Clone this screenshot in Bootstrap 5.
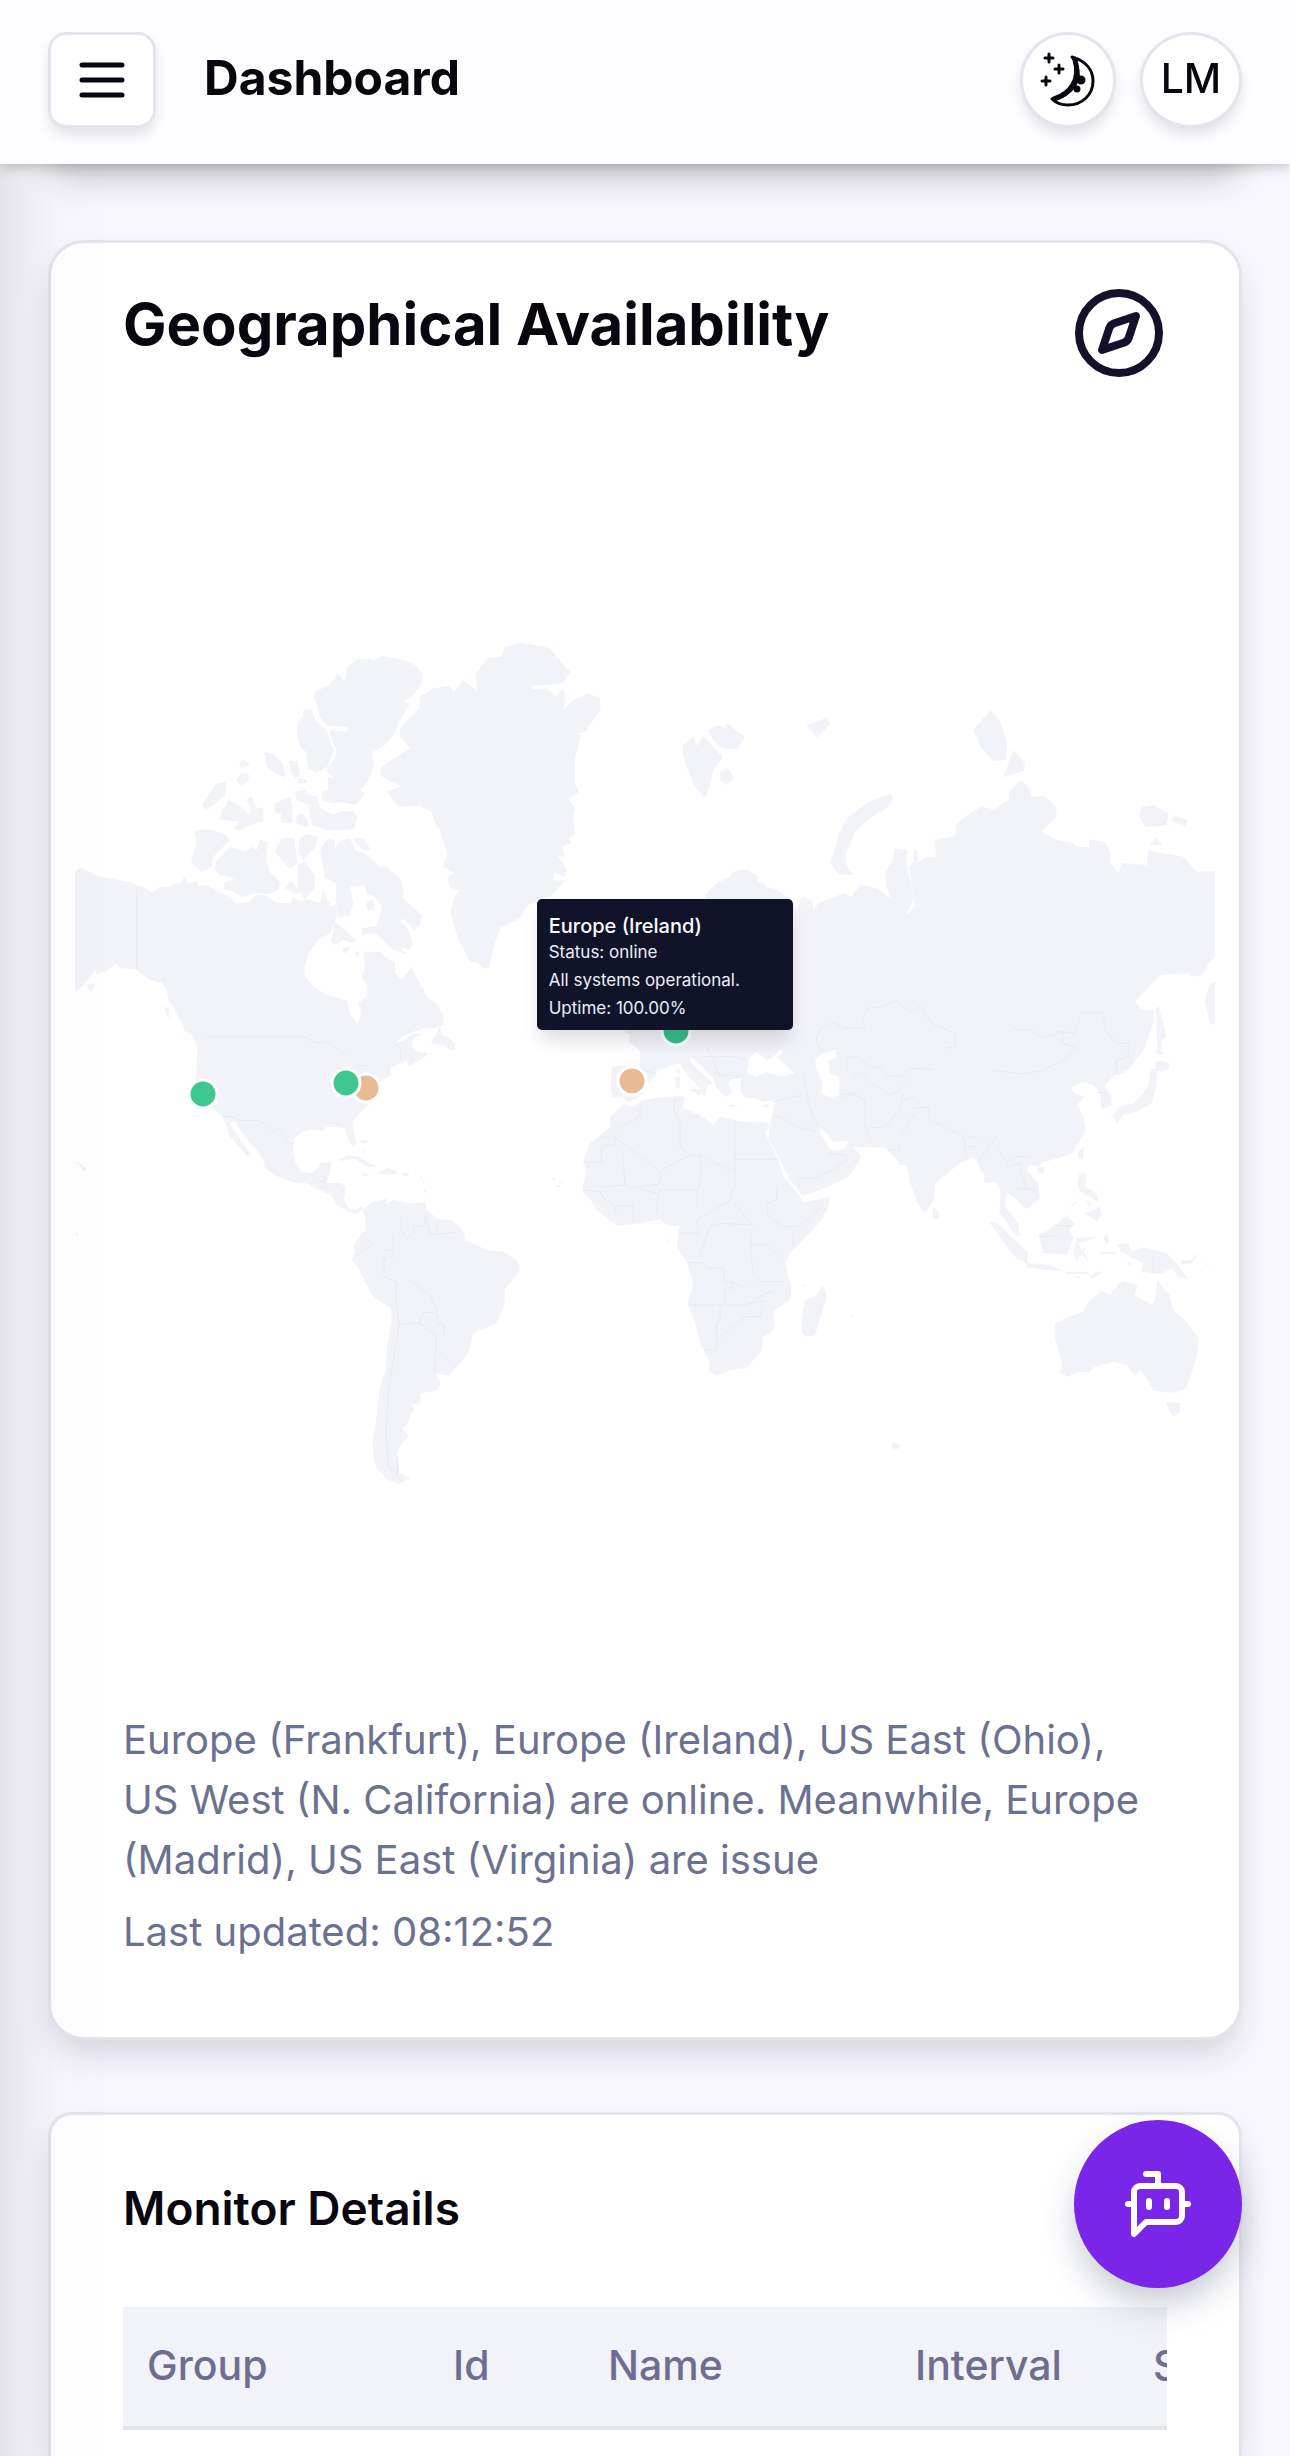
<!DOCTYPE html>
<html lang="en">
<head>
<meta charset="utf-8">
<meta name="viewport" content="width=device-width, initial-scale=1">
<title>Dashboard</title>
<link href="https://cdn.jsdelivr.net/npm/bootstrap@5.3.0/dist/css/bootstrap.min.css" rel="stylesheet">
<style>
  :root { --ink: #09060f; --line: #e4e4ee; --soft: #f2f3f8; --muted-ink: #6b7190; }
  body { font-family: Inter, "Liberation Sans", sans-serif; color: var(--ink); background: #f8f7fd; }
  .app-shell { min-height: 100vh; overflow: hidden; }
  .edge-shade { position: fixed; top: 0; bottom: 0; left: 0; width: 112px; z-index: 5; pointer-events: none;
    background: linear-gradient(90deg, rgba(10,10,20,.08), rgba(10,10,20,.045) 25%, rgba(10,10,20,.012) 50%, transparent); }
  .topbar { height: 164px; padding: 0 48px 4px; background: #fdfcfe; z-index: 10; box-shadow: 0 3px 12px rgba(0,0,0,.22); }
  .topbar-title { font-size: 48px; line-height: 56px; font-weight: 700; margin: 0 0 4px 48px; }
  .tool-btn { height: 96px; border: 3px solid var(--line); background: #fff; color: var(--ink); padding: 0;
    display: flex; align-items: center; justify-content: center; box-shadow: 0 8px 14px -2px rgba(20,20,40,.13); font-size: 41px; line-height: 56px; font-weight: 500; }
  .tool-menu { width: 108px; border-radius: 18px; }
  .tool-round { width: 96px; border-radius: 50%; }
  .tool-user { width: 102px; border-radius: 50%; padding-bottom: 4px; }
  .content { padding: 76px 48px 0; gap: 72px; }
  .content::before { content: ""; position: absolute; left: 48px; right: 48px; top: -60px; height: 50px; box-shadow: 0 22px 34px 2px rgba(0,0,0,.2); border-radius: 36px; }
  .panel { border: 3px solid var(--line); border-radius: 36px; background: #fff; box-shadow: 0 18px 34px -6px rgba(30,30,60,.17); }
  .panel-head { padding: 42px 72px 0; }
  .panel-title { font-size: 58px; line-height: 78px; font-weight: 700; margin: 0; }
  .map-wrap { padding: 0 24px; }
  .map-area { position: relative; }
  .map-area svg { display: block; width: 100%; height: auto; }
  .land { fill: var(--soft); }
  .sea { fill: #fff; }
  .borders { fill: none; stroke: #e9e9f0; stroke-width: 3; stroke-linejoin: round; }
  .pins circle { stroke: #fff; stroke-width: 3; }
  .map-tip { position: absolute; left: 40.5%; top: 39%; width: 256px; border-radius: 5px; padding: 13px 12px 6px; background: #111428; color: #eceef8;
    font-size: 17px; line-height: 24px; box-shadow: 0 14px 18px -4px rgba(20,20,40,.14); }
  .map-tip h3 { font-size: 20px; line-height: 28px; font-weight: 500; margin: 0; color: #fafaff; }
  .map-tip p { margin: 0 0 4px; }
  .panel-text { padding: 0 72px 63px; font-size: 40px; line-height: 60px; color: var(--muted-ink); }
  .panel-text p { margin: 0 0 12px; }
  .panel-open { border-bottom: 0; border-radius: 24px 24px 0 0; padding: 66px 72px 0; }
  .sub-title { font-size: 46px; line-height: 54px; font-weight: 600; margin: 0 0 72px; }
  .table-clip { overflow: hidden; }
  .monitors { table-layout: fixed; width: 1320px; margin: 0; }
  .monitors th { height: 121px; padding: 0 24px 4px; vertical-align: middle; font-size: 41px; line-height: 60px; font-weight: 500;
    color: #6f6d90; background: var(--soft); border-bottom: 4px solid var(--line); }
  .fab { position: fixed; right: 48px; bottom: 168px; width: 168px; height: 168px; border: 0; border-radius: 50%; background: #7926e8; z-index: 20;
    display: flex; align-items: center; justify-content: center; box-shadow: 0 18px 36px -4px rgba(40,50,90,.28); }
  .stroke-icon { fill: none; stroke: currentColor; stroke-width: 2; stroke-linecap: round; stroke-linejoin: round; }
</style>
</head>
<body>
<div class="app-shell d-flex flex-column">
  <header class="topbar d-flex align-items-center position-relative">
    <button type="button" class="tool-btn tool-menu" aria-label="Open menu">
      <svg width="60" height="60" viewBox="0 0 24 24" class="stroke-icon"><path d="M4 6h16M4 12h16M4 18h16"/></svg>
    </button>
    <h1 class="topbar-title">Dashboard</h1>
    <div class="d-flex ms-auto gap-4">
      <button type="button" class="tool-btn tool-round" aria-label="Switch theme">
        <svg width="56" height="56" viewBox="0 0 56 56" fill="none" stroke="currentColor" stroke-width="3" stroke-linecap="round" stroke-linejoin="round">
          <path d="M32 5C46 9 53 18 53 29C53 43 42 53 28 53C21 53 15 50 12 47C25 46 41 34 38 18C37 12 35 8 32 5Z"/>
          <path d="M35 8C41 28 30 42 14 47" stroke-width="5"/>
          <circle cx="41" cy="28" r="3" fill="currentColor"/><circle cx="37" cy="37" r="2" fill="currentColor"/>
          <path d="M9 2v8M5 6h8M19 13v8M15 17h8M6 25v8M2 29h8"/>
        </svg>
      </button>
      <button type="button" class="tool-btn tool-user">LM</button>
    </div>
  </header>

  <main class="content d-flex flex-column flex-grow-1 position-relative">
    <section class="panel position-relative">
      <div class="panel-head d-flex justify-content-between align-items-start">
        <h2 class="panel-title">Geographical Availability</h2>
        <svg width="96" height="96" viewBox="0 0 24 24" class="stroke-icon" color="#14122a"><circle cx="12" cy="12" r="10"/><path d="m16.24 7.76-1.804 5.411a2 2 0 0 1-1.265 1.265L7.76 16.24l1.804-5.411a2 2 0 0 1 1.265-1.265z"/></svg>
      </div>
      <div class="map-wrap">
        <div class="map-area">
          <svg viewBox="75 381 1140 1329" role="img" aria-label="World map of monitor regions">
            <g class="land">
              <!-- North America and the Arctic islands -->
              <g transform="translate(60 620) scale(.33333)">
                <path d="M45 755L62 742L110 768L165 778L205 785L255 805L275 818L300 800L322 802L350 788L360 792L372 772L385 790L410 782L415 798L440 795L480 818L515 832L525 850L560 850L590 826L615 825L650 848L690 850L700 832L720 845L745 838L780 850L790 810L805 845L815 860L830 850L830 895L810 940L775 960L745 1000L733 1040L735 1070L760 1100L800 1125L860 1142L870 1180L893 1215L903 1180L895 1150L920 1130L922 1100L905 1070L915 1040L910 995L960 995L975 1010L1005 1025L1005 1060L1025 1080L1055 1040L1075 1080L1100 1130L1135 1155L1152 1190L1150 1215L1120 1225H372L340 1160L325 1140L318 1100L305 1088L270 1080L225 1048L185 1045L165 1030L145 1050L110 1065L105 1050L95 1065L65 1100L45 1115Z"/>
                <path d="M862 140L895 117L930 116L938 122L970 108L1030 120L1065 135L1087 160L1085 190L1060 225L1030 245L1050 250L1020 300L1000 345L975 375L935 398L942 438L925 480L900 510L915 520L888 555L845 545L820 550L785 540L788 512L805 510L803 470L822 475L800 450L825 415L828 385L815 360L808 330L860 335L865 322L800 318L780 290L775 265L762 235L765 215L812 192L832 160L853 182Z"/>
                <path d="M730 270L755 268L770 305L800 330L812 370L822 390L802 442L770 457L745 445L738 395L722 385L710 345L715 305L728 290Z"/>
                <path d="M705 515L735 510L745 525L770 530L778 560L800 575L820 583L845 573L880 574L893 595L880 627L850 630L800 630L755 615L745 555L710 540Z"/>
                <path d="M537 430L550 418L570 435L545 445ZM527 480L545 460L567 462L565 480L545 497ZM612 397L640 402L668 430L678 472L655 465L622 445ZM688 422L712 422L720 465L705 475L692 460ZM712 475L738 478L740 490L715 490ZM468 492L497 485L497 525L440 570L426 555ZM505 540L545 560L565 585L575 570L560 540L575 525L588 562L610 565L610 605L570 615L540 632L522 625L535 605L480 598L485 575ZM645 550L690 530L698 570L695 610L665 608L663 580L646 580ZM708 590L725 578L742 600L742 622L710 612Z"/>
                <path d="M403 633L440 628L490 640L510 660L490 680L460 710L455 740L425 757L393 725L410 670ZM475 715L510 680L555 695L575 680L590 690L600 660L622 665L618 720L628 755L660 785L655 810L630 822L580 820L545 832L520 815L490 805L495 785L530 775L480 765L462 745ZM645 695L665 655L703 655L712 730L690 747L665 720ZM718 660L740 642L775 650L765 680L730 722L715 700ZM712 735L735 722L765 770L765 800L735 840L712 800ZM675 805L690 783L720 810L715 825Z"/>
                <path d="M780 690L800 657L825 660L825 690L840 660L870 655L885 690L915 700L960 740L980 740L1020 775L1032 815L1028 835L1085 885L1080 915L1060 930L1035 898L1018 900L1045 930L1057 965L1050 990L1020 980L1040 1003L1000 990L970 960L950 940L905 945L905 925L950 918L965 860L945 830L920 820L915 795L870 800L880 850L870 885L835 895L828 850L828 790L795 775ZM880 655L910 655L933 690L905 690ZM920 845L940 838L943 870L920 870ZM825 905L890 960L875 970L850 960L825 975L813 965ZM848 985L870 980L860 1000L848 995ZM885 995L898 995L895 1012ZM313 1160L328 1165L325 1185L335 1200L318 1185ZM80 1095L105 1090L103 1108L88 1115Z"/>
              </g>
              <!-- Greenland and Svalbard -->
              <g transform="translate(360 620) scale(.33333)">
                <path d="M180 230L220 205L270 198L282 215L308 180L350 210L348 160L385 112L425 110L435 80L480 69L565 82L630 155L610 190L512 198L515 208L560 205L588 228L608 205L617 230L610 270L640 240L685 220L720 235L722 270L675 335L645 342L663 343L645 415L645 490L657 517L625 535L645 565L640 595L645 640L625 655L635 670L605 680L615 712L592 705L620 750L615 772L585 755L580 780L615 782L575 825L505 855L480 895L420 925L400 985L387 1045L370 1045L350 1028L330 1025L292 950L272 880L280 840L298 810L270 805L262 770L285 760L250 740L262 700L240 630L220 600L215 575L180 558L115 560L82 515L125 498L90 485L60 465L65 440L150 385L118 345L120 325L178 265Z"/>
                <path d="M968 375L1000 350L1010 378L1030 348L1088 412L1060 450L1045 515L1032 532L1003 497L980 440L970 405ZM1042 330L1078 315L1095 325L1100 310L1153 350L1135 385L1100 388L1070 375ZM1080 455L1103 443L1123 475L1100 495L1082 482Z"/>
              </g>
              <!-- United States, Central and South America -->
              <g transform="translate(60 1000) scale(.33333)">
                <path d="M372 75H1130L1060 95L1030 108L1005 130L1030 122L1060 100L1085 105L1060 115L1055 140L1075 155L1105 160L1090 175L1045 198L1040 180L1010 195L990 205L995 225L965 240L950 270L940 300L900 340L878 365L878 385L890 430L880 442L865 420L855 385L835 382L800 380L790 392L760 388L725 395L703 415L698 450L705 485L725 515L755 520L772 505L780 490L815 485L805 530L800 550L840 548L857 560L852 600L865 625L885 632L900 620L920 630L915 640L905 630L885 642L865 635L830 615L820 592L790 575L765 565L740 550L705 550L650 528L615 505L610 480L590 450L555 410L525 365L515 362L512 375L545 425L572 462L565 470L540 445L510 408L500 380L485 345L450 320L425 290L408 240L410 200L412 140L395 105L370 90Z"/>
                <path d="M1140 75L1128 105L1112 130L1150 135L1165 148L1183 150L1185 130L1165 110L1145 105ZM835 480L865 465L900 472L950 500L920 500L885 477L845 482ZM955 520L985 503L1017 518L985 526ZM1028 519H1046V527H1028ZM907 520L932 525L912 528ZM900 422L918 420L922 430L905 430ZM905 440L918 455L910 458ZM45 485L58 488L72 500L80 508L70 515L64 500ZM48 699h6v6h-6zM1090 545h4v8h-4zM1092 570h4v8h-4zM1082 532h5v4h-5zM1480 535h5v5h-5zM1492 556h6v5h-6z"/>
                <path d="M910 630L940 605L970 600L985 590L978 612L1000 600L1050 610L1095 607L1100 630L1135 658L1175 660L1200 680L1213 700L1215 722L1250 735L1280 750L1330 755L1375 785L1380 810L1335 870L1333 910L1310 970L1285 980L1240 998L1228 1050L1210 1080L1185 1105L1165 1127L1125 1120L1142 1148L1130 1173L1082 1180L1080 1210L1055 1212L1065 1230L1050 1245L1045 1270L1028 1285L1045 1310L1025 1330L1010 1365L1018 1400L1018 1420L1052 1435L1015 1452L985 1440L950 1405L940 1370L938 1310L945 1290L960 1160L978 1110L980 1050L995 960L992 925L935 885L905 825L890 795L875 780L885 755L880 740L905 700L918 690L915 650Z"/>
              </g>
              <!-- Europe, Arabia and Africa -->
              <g transform="translate(500 860) scale(.33333)">
                <path d="M615 105L650 70L690 50L700 35L740 28L775 50L770 65L790 70L800 80L830 90L860 110L890 150L915 178L910 150L905 112L935 125L940 150L955 130L1030 100L1055 110L1080 75L1130 85L1175 120L1220 135L1220 920L1185 890L1155 862L1090 860L1055 850L1083 892L1060 930L1040 955L960 990L905 1008L895 990L870 960L835 890L805 835L810 790L822 745L825 720L790 725L770 715L735 712L720 690L725 655L690 658L685 672L695 695L680 712L665 700L650 685L640 655L610 625L590 605L570 590L575 610L600 635L640 670L625 675L612 710L602 685L560 645L540 610L515 615L490 628L470 630L465 650L440 670L430 700L410 715L385 725L370 710L340 712L332 695L335 620L365 615L420 620L420 570L385 545L390 525L372 515L400 505L615 500Z"/>
                <path d="M525 652L541 650L540 685L527 685ZM528 632L538 626L538 645ZM565 688L605 688L600 708ZM685 733L720 738L690 741ZM785 738L808 730L800 744Z"/>
                <path d="M370 730L400 740L430 720L480 712L540 708L555 712L548 745L600 765L640 795L660 770L700 780L740 785L800 788L808 800L795 820L835 900L850 950L880 985L905 1015L905 1028L990 1012L985 1040L960 1085L905 1145L870 1180L855 1210L865 1250L875 1275L873 1315L820 1355L822 1410L790 1430L785 1470L740 1525L690 1530L650 1547L630 1535L628 1505L600 1450L590 1400L563 1330L580 1270L560 1205L530 1160L538 1100L500 1095L480 1078L420 1090L350 1097L290 1050L270 1015L250 1000L247 980L260 940L250 905L270 850L330 800L330 770L360 745Z"/>
                <path d="M968 1272L980 1310L945 1425L920 1430L905 1415L905 1380L915 1320L950 1305ZM1053 1363h9v7h-9zM903 1267l5 8 10 2-10 3zM160 955h6v5h-6zM178 965h10v4h-10zM168 975h10v4h-10zM503 1137h6v7h-6z"/>
              </g>
              <!-- Northern Asia -->
              <g transform="translate(800 680) scale(.33333)">
                <path d="M-20 720L5 650L35 660L40 680L30 695L50 695L60 680L120 645L125 660L190 650L185 615L240 630L275 660L260 620L255 575L280 540L285 505L322 510L318 550L330 600L340 660L312 715L345 680L335 620L328 560L342 545L342 510L352 515L352 550L380 530L407 530L405 480L465 468L470 430L510 400L545 380L580 388L625 360L628 335L662 300L685 320L695 352L735 348L770 385L768 412L722 455L752 470L770 480L820 490L830 502L867 500L868 478L915 485L932 520L930 550L955 580L965 548L1040 555L1045 512L1150 530L1190 575L1245 573V833L1225 850L1208 885L1175 890L1165 880L1085 885L1065 900L1005 965L1025 990L1062 990L1060 1030L1030 1110L985 1170L955 1185H-20Z"/>
                <path d="M90 545L110 490L118 460L140 415L200 370L270 340L280 355L265 380L210 415L165 455L138 520L138 555L158 585L115 583ZM520 150L572 90L600 125L622 190L618 240L580 243L545 205ZM610 292L640 210L675 250L672 272ZM1017 410L1025 380L1060 375L1105 402L1100 435L1038 442ZM1117 405L1165 420L1155 440L1120 425ZM1048 495L1070 470L1088 495ZM18 135L60 122L78 112L93 130L50 173L38 155ZM1065 985L1078 980L1100 1070L1085 1080L1085 1110L1090 1125L1072 1125L1070 1020ZM1245 905L1230 912L1215 960L1230 1035L1245 1030Z"/>
              </g>
              <!-- Southern Asia and Australia -->
              <g transform="translate(800 1050) scale(.33333)">
                <path d="M-20 50H955L935 85L915 105L935 145L935 165L905 178L900 130L880 105L850 95L812 115L825 130L855 140L830 165L850 200L857 240L820 305L790 320L725 338L720 350L690 345L680 360L715 400L720 445L680 478L660 460L640 440L620 430L615 470L655 520L660 560L640 550L620 515L598 490L602 420L585 395L555 400L550 370L535 345L520 322L480 340L405 400L402 450L375 488L355 465L330 400L320 345L300 345L285 320L255 292L155 290L-20 270Z"/>
                <path d="M400 470L418 490L415 508L398 505ZM710 352L735 352L730 370L712 370ZM835 305L852 290L848 328L835 322ZM838 370L860 372L855 410L890 430L895 455L870 440L840 425L832 400ZM855 490L885 480L900 470L905 495L890 512L870 500ZM855 450L875 460L870 475ZM803 482L828 453L830 458ZM1050 55L1070 60L1070 110L1055 160L1010 185L970 195L950 218L938 195L960 170L1000 160L1020 140L1045 110L1050 80ZM1065 35L1085 32L1108 40L1108 55L1085 65L1068 62ZM565 515L590 518L640 565L682 605L680 638L650 625L620 590L590 545ZM680 638L750 645L788 662L740 660L680 652ZM715 555L745 540L800 498L825 520L808 540L820 565L800 615L730 608ZM830 565L880 560L890 556L870 570L835 580L845 600L860 585L850 605L868 632L855 625L845 612L832 635L820 605ZM798 665H862V671H800ZM820 678L842 680L838 686ZM870 685L885 665L910 665L880 685ZM950 583L985 580L995 605L1030 592L1100 610L1135 645L1165 688L1135 680L1115 655L1085 672L1025 665L1030 640L1000 625L965 605ZM1140 632L1175 630L1185 615L1165 600L1192 618L1175 640L1145 642ZM1207 628L1222 645L1240 655L1218 645ZM918 550L927 570L918 585L912 565ZM898 607H948V612H898ZM985 635h8v10h-8z"/>
                <path d="M765 820L800 803L850 785L865 755L905 722L930 735L965 693L1015 705L1003 735L1055 765L1065 750L1072 690L1108 735L1120 780L1155 810L1193 860L1195 900L1175 970L1155 1017L1115 1030L1060 1022L1040 985L1022 960L1003 977L980 945L940 935L885 950L865 967L840 965L805 980L780 968L787 940L765 870ZM1098 1055L1142 1060L1138 1090L1120 1100L1108 1085ZM277 1178L298 1183V1196H277Z"/>
              </g>
            </g>
            <g class="sea" transform="translate(500 860) scale(.33333)">
              <path d="M738 640L750 590L770 575L800 600L820 590L845 566L845 582L828 592L885 640L840 650L800 635L770 650ZM945 600L970 580L1008 568L1008 595L985 600L990 640L1018 650L1018 705L990 713L965 700L968 670L950 630ZM958 800L985 825L1000 845L1045 843L1030 870L990 870L980 850L962 825Z"/>
            </g>
            <g class="borders">
              <path transform="translate(60 1000) scale(.33333)" d="M230 -335V-95M435 112H735L760 125L785 130L800 125L840 150L858 170M890 198L920 196M1005 130L1022 145V180M490 350L515 350L540 362L600 362L640 395L655 385L690 430L700 432M1025 655L1022 690L1040 715L1062 698L1060 680L1095 678V645M1100 655L1110 705L1185 697M1135 660L1130 690M1000 705V770L972 775V830L1010 845L1008 910L1018 975L1060 968L1080 970L1130 1010L1125 1075V1120M1048 840L1110 885L1130 930V970L1152 975V1010M1080 970L1090 938L1125 938M1145 1060L1185 1100M1018 975L1000 1080L985 1180L978 1300L985 1400L1010 1415M885 770L940 730L920 718M970 750H995M770 545H795V525M1012 1370V1430"/>
              <path transform="translate(500 860) scale(.33333)" d="M300 832H345V855H305V907H250M345 832L470 925L485 945L478 972L385 985L375 975L368 870M375 975L310 980M420 740V770L340 812M525 715L522 750L540 785V860L570 885L485 930M570 885H600L700 935M705 780V985M705 898H835M600 890L605 930L592 1000V1040M475 1000L480 990H590M470 1060L475 1000L410 985M252 990L300 995L310 1015L340 1030L350 1060M345 1040L400 1035V1085M830 985L830 1020L800 1030L805 1070L850 1100L900 1100L965 1040M595 1110L590 1080L640 1050L690 1020L700 985M700 1030L760 1095L660 1090L630 1100L610 1160L600 1180M540 1120H600M750 1165L755 1110M750 1155H800L850 1200M750 1160L760 1240L780 1265L855 1265M880 1110V1160M565 1208H610L620 1225H670L672 1265H695V1285H675V1335H565M695 1265L740 1285M760 1320L800 1300L820 1290M660 1340V1385H650V1470H615M675 1335H735L790 1320L780 1370L735 1370L650 1440M820 765L850 775L890 800L950 815M895 955L940 955L1000 930L1040 900L1035 885L985 880M910 640L920 700L935 760L955 800M820 725L910 705M1025 715L1060 700L1090 720M610 590H700L740 600M640 640L720 650M620 560L640 600L660 650M430 630L470 640"/>
              <path transform="translate(800 680) scale(.33333)" d="M62 1110L48 1080L60 1045L100 1028L140 1045H195L185 1025L200 985L245 980L290 962L330 995L360 980L395 1030L465 1060V1100L435 1105M140 1175V1132L170 1130L205 1155L245 1165L260 1185L300 1190L330 1165L395 1168M630 1035L650 1050H690L725 1073L795 1055L785 1088L830 1105L790 1140L725 1172L670 1182L580 1172M770 1053L825 1060L842 1000L910 998L915 1050L950 1090H985V1130L950 1140V1180"/>
              <path transform="translate(800 1050) scale(.33333)" d="M120 135L155 128L195 150V235L255 230L300 180L310 130M195 240L215 275M155 80L180 65L215 100L270 135L330 100M310 150L345 140M335 175L385 172L390 210L430 230L490 260L500 325M500 262H535M505 290H530M590 255L560 300L535 335M590 290L620 335L650 320L690 320M620 350L660 340L665 375L680 415M650 418H705M300 250L320 230L345 190M265 300H300L295 285M890 128H920M1060 612V668M770 527H820M720 562L775 555M680 605V640"/>
            </g>
            <g class="pins">
              <circle cx="676" cy="1031" r="14" fill="#37c089"/>
              <circle cx="632" cy="1081" r="14" fill="#e8bb94"/>
              <circle cx="366" cy="1088" r="14" fill="#e8bb94"/>
              <circle cx="346" cy="1083" r="14" fill="#3ec78f"/>
              <circle cx="203" cy="1094" r="14" fill="#3ec78f"/>
            </g>
          </svg>
          <div class="map-tip" role="tooltip">
            <h3>Europe (Ireland)</h3>
            <p>Status: online</p>
            <p>All systems operational.</p>
            <p>Uptime: 100.00%</p>
          </div>
        </div>
      </div>
      <div class="panel-text">
        <p>Europe (Frankfurt), Europe (Ireland), US East (Ohio), US West (N. California) are online. Meanwhile, Europe (Madrid), US East (Virginia) are issue</p>
        <p>Last updated: 08:12:52</p>
      </div>
    </section>

    <section class="panel panel-open flex-grow-1 position-relative">
      <h2 class="sub-title">Monitor Details</h2>
      <div class="table-clip">
        <table class="monitors">
          <colgroup><col style="width:306px"><col style="width:155px"><col style="width:307px"><col style="width:238px"><col></colgroup>
          <thead><tr><th scope="col">Group</th><th scope="col">Id</th><th scope="col">Name</th><th scope="col">Interval</th><th scope="col">Status</th></tr></thead>
        </table>
      </div>
    </section>
  </main>
</div>
<div class="edge-shade"></div>
<button type="button" class="fab text-white" aria-label="Open assistant">
  <svg width="72" height="72" viewBox="0 0 24 24" class="stroke-icon"><path d="M12 6V2H8M8 18l-4 4V8a2 2 0 0 1 2-2h12a2 2 0 0 1 2 2v8a2 2 0 0 1-2 2ZM2 12h2M9 11v2M15 11v2M20 12h2"/></svg>
</button>
<script src="https://cdn.jsdelivr.net/npm/bootstrap@5.3.0/dist/js/bootstrap.bundle.min.js"></script>
</body>
</html>
